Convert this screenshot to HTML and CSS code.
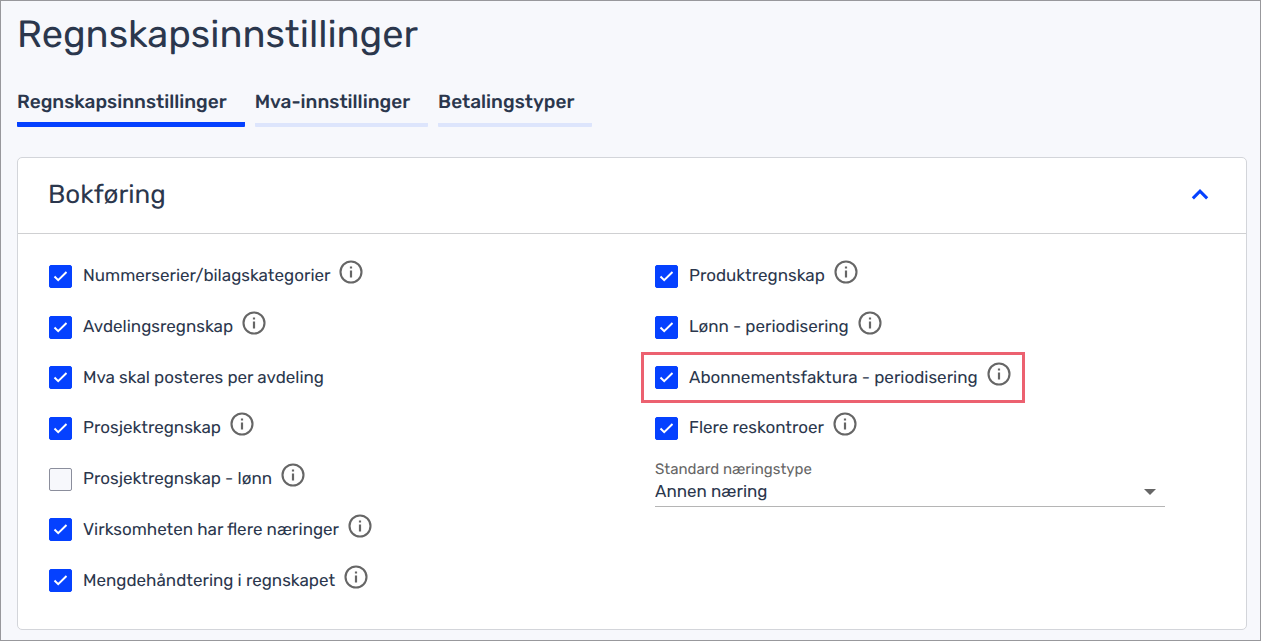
FILE: index.html
```html
<!DOCTYPE html>
<html lang="no">
<head>
<meta charset="UTF-8">
<meta name="viewport" content="width=device-width, initial-scale=1.0">
<title>Regnskapsinnstillinger</title>
<link rel="stylesheet" href="styles.css">
</head>
<body>
<!-- Shared icon -->
<svg class="sprite" aria-hidden="true">
    <symbol id="info" viewBox="0 0 24 24">
        <circle cx="12" cy="12" r="10.5" fill="none" stroke="currentColor" stroke-width="2.1"/>
        <path fill="currentColor" d="M10.9 6.4h2.2v2.2h-2.2zM10.9 10.6h2.2v7h-2.2z"/>
    </symbol>
</svg>
<main class="page">
    <h1>Regnskapsinnstillinger</h1>
    <nav class="tabs">
        <a class="tab active" href="#regnskap">Regnskapsinnstillinger</a>
        <a class="tab" href="#mva">Mva-innstillinger</a>
        <a class="tab" href="#betaling">Betalingstyper</a>
    </nav>
    <section class="card">
        <header class="card-header">
            <h2>Bokføring</h2>
            <button type="button" class="toggle" aria-label="Skjul" aria-expanded="true">
                <svg viewBox="0 0 16 10"><path d="M1.5 8.5L8 2l6.5 6.5" fill="none" stroke="currentColor" stroke-width="2.8"/></svg>
            </button>
        </header>
        <form class="settings">
            <div class="setting"><label><input type="checkbox" checked> Nummerserier/bilagskategorier</label><svg class="info"><use href="#info"/></svg></div>
            <div class="setting"><label><input type="checkbox" checked> Avdelingsregnskap</label><svg class="info"><use href="#info"/></svg></div>
            <div class="setting"><label><input type="checkbox" checked> Mva skal posteres per avdeling</label></div>
            <div class="setting"><label><input type="checkbox" checked> Prosjektregnskap</label><svg class="info"><use href="#info"/></svg></div>
            <div class="setting"><label><input type="checkbox"> Prosjektregnskap - lønn</label><svg class="info"><use href="#info"/></svg></div>
            <div class="setting"><label><input type="checkbox" checked> Virksomheten har flere næringer</label><svg class="info"><use href="#info"/></svg></div>
            <div class="setting"><label><input type="checkbox" checked> Mengdehåndtering i regnskapet</label><svg class="info"><use href="#info"/></svg></div>
            <div class="setting"><label><input type="checkbox" checked> Produktregnskap</label><svg class="info"><use href="#info"/></svg></div>
            <div class="setting"><label><input type="checkbox" checked> Lønn - periodisering</label><svg class="info"><use href="#info"/></svg></div>
            <div class="setting highlight"><label><input type="checkbox" checked> Abonnementsfaktura - periodisering</label><svg class="info"><use href="#info"/></svg></div>
            <div class="setting"><label><input type="checkbox" checked> Flere reskontroer</label><svg class="info"><use href="#info"/></svg></div>
            <div class="field">
                <label for="naering">Standard næringstype</label>
                <div class="select-wrap">
                    <select id="naering"><option>Annen næring</option></select>
                    <svg class="arrow" viewBox="0 0 12 6"><path d="M0 0h12L6 6z" fill="currentColor"/></svg>
                </div>
            </div>
        </form>
    </section>
</main>
</body>
</html>
```

FILE: styles.css
```css
* {
    box-sizing: border-box;
}
body {
    margin: 0;
    min-height: 100vh;
    border: 1px solid #98989c;
    background: #f7f8fc;
    color: #2b374d;
    font-family: Rubik, Roboto, sans-serif;
    font-size: 17px;
    text-rendering: geometricPrecision;
}
.sprite {
    display: none;
}
.page {
    padding: 9px 13px 10px 16px;
}
h1, h2 {
    margin: 0;
    font-weight: 400;
}
h1 {
    font-size: 38px;
    line-height: 48px;
}
/* Tabs */
.tabs {
    display: flex;
    gap: 10px;
    margin-top: 31px;
}
.tab {
    padding-right: 18px;
    color: inherit;
    font-size: 19px;
    font-weight: 500;
    line-height: 26px;
    text-decoration: none;
    height: 38px;
    border-bottom: 4px solid #dde5fc;
    border-radius: 1px;
}
.tab.active {
    border-bottom: 5px solid #0541ff;
}
/* Card */
.card {
    margin-top: 30px;
    background: #fff;
    border: 1px solid #d3d5da;
    border-radius: 5px;
}
.card-header {
    display: flex;
    justify-content: space-between;
    align-items: center;
    height: 76px;
    padding: 0 37px 2px 30px;
    border-bottom: 1px solid #cfd0d2;
}
h2 {
    font-size: 26px;
    line-height: 32px;
}
.toggle {
    padding: 0;
    border: 0;
    background: none;
    color: #0541ff;
    cursor: pointer;
}
.toggle svg {
    display: block;
    width: 18px;
    height: 11px;
}
.settings {
    display: grid;
    grid-template-columns: 1fr 1fr;
    grid-template-rows: repeat(7, 1fr);
    grid-auto-flow: column;
    column-gap: 46px;
    min-height: 395px;
    padding: 17px 31px 23px;
}
.setting {
    display: flex;
    align-items: center;
    gap: 9px;
}
.setting label {
    display: flex;
    align-items: center;
    gap: 11px;
    line-height: 24px;
}
.info {
    width: 24px;
    height: 24px;
    margin-bottom: 8px;
    color: #666;
}
input[type="checkbox"] {
    appearance: none;
    width: 23px;
    height: 23px;
    margin: 0;
    border: 1px solid #8b8e9c;
    border-radius: 2px;
    background: #f7f8fc;
}
input[type="checkbox"]:checked {
    border-color: #0541ff;
    background: #0541ff url("data:image/svg+xml,%3Csvg xmlns='http://www.w3.org/2000/svg' viewBox='0 0 21 21'%3E%3Cpath d='M4.5 10.5l3.7 3.7L16.5 6' fill='none' stroke='white' stroke-width='2'/%3E%3C/svg%3E");
}
.highlight {
    justify-self: start;
    margin-left: -14px;
    padding: 0 11px;
    border: 3px solid #ec6170;
}
/* Drop-down */
.field {
    grid-row: span 3;
    margin-right: 50px;
    padding-top: 5px;
}
.field label {
    display: block;
    color: #666;
    font-size: 15px;
    line-height: 20px;
}
.select-wrap {
    display: flex;
    align-items: center;
    border-bottom: 1px solid #b5b5b5;
}
select {
    appearance: none;
    flex: 1;
    height: 27px;
    margin-right: -21px;
    padding: 0 21px 3px 0;
    border: 0;
    background: none;
    color: inherit;
    font: inherit;
}
.arrow {
    width: 12px;
    height: 6px;
    margin-right: 9px;
    color: #666;
    pointer-events: none;
}
```
